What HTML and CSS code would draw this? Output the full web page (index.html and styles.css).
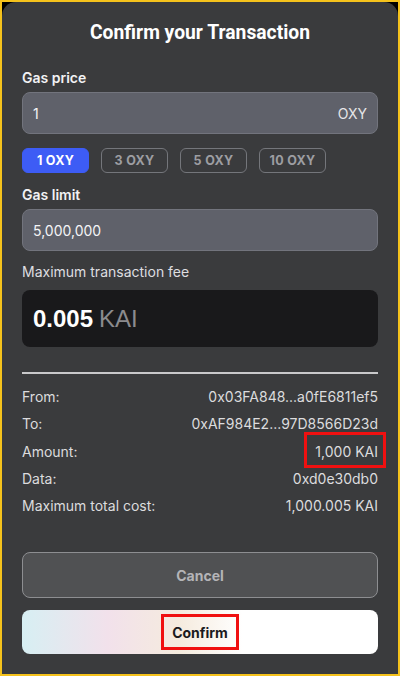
FILE: index.html
```html
<!DOCTYPE html>
<html lang="en">
<head>
    <meta charset="UTF-8">
    <meta name="viewport" content="width=device-width, initial-scale=1.0">
    <title>Confirm your Transaction</title>
    <link rel="stylesheet" href="styles.css">
</head>
<body>
    <div id="sheet">
        <h1>Confirm your Transaction</h1>

        <div class="label">Gas price</div>
        <div class="field">
            <span>1</span>
            <span class="unit">OXY</span>
        </div>

        <div class="chips">
            <button class="chip active">1 OXY</button>
            <button class="chip">3 OXY</button>
            <button class="chip">5 OXY</button>
            <button class="chip">10 OXY</button>
        </div>

        <div class="label">Gas limit</div>
        <div class="field">
            <span>5,000,000</span>
        </div>

        <div class="label light">Maximum transaction fee</div>
        <div class="fee">
            <span class="fee-value">0.005</span>
            <span class="fee-unit">KAI</span>
        </div>

        <hr class="divider">

        <div class="details">
            <div class="row"><span>From:</span><span>0x03FA848...a0fE6811ef5</span></div>
            <div class="row"><span>To:</span><span>0xAF984E2...97D8566D23d</span></div>
            <div class="row"><span>Amount:</span><span class="marked amount">1,000 KAI</span></div>
            <div class="row"><span>Data:</span><span>0xd0e30db0</span></div>
            <div class="row"><span>Maximum total cost:</span><span>1,000.005 KAI</span></div>
        </div>

        <div class="actions">
            <button class="btn cancel">Cancel</button>
            <button class="btn confirm"><span class="marked">Confirm</span></button>
        </div>
    </div>
</body>
</html>
```

FILE: styles.css
```css
* {
    margin: 0;
    padding: 0;
    box-sizing: border-box;
}

body {
    width: 400px;
    height: 676px;
    border: 2px solid #f5c21c;
    background: #000;
    font-family: Inter, "Open Sans", sans-serif;
    color: #e4e4e6;
    overflow: hidden;
}

#sheet {
    height: 100%;
    background: #3a3b3d;
    border-radius: 14px 14px 0 0;
    padding: 19px 20px 0;
    display: flex;
    flex-direction: column;
}

h1 {
    font-family: Roboto, "Liberation Sans", sans-serif;
    font-size: 19.3px;
    line-height: 24px;
    font-weight: 700;
    color: #fff;
    text-align: center;
}

.label {
    font-size: 14px;
    line-height: 18px;
    font-weight: 600;
    color: #f2f2f4;
    margin-top: 24px;
}

.label.light {
    font-weight: 400;
    color: #dedee0;
    margin-top: 12px;
}

.chips + .label {
    margin-top: 13px;
}

.field {
    margin-top: 5px;
    height: 42px;
    background: #5f616a;
    border: 1px solid #72747d;
    border-radius: 8px;
    padding: 0 10px;
    display: flex;
    align-items: center;
    justify-content: space-between;
    font-size: 14px;
    color: #f4f4f6;
}

.unit {
    color: #e6e6e8;
}

.chips {
    margin-top: 14px;
    display: flex;
    gap: 12px;
}

.chip {
    width: 67px;
    height: 25px;
    border: 1px solid #74767b;
    border-radius: 6px;
    background: transparent;
    color: #9d9ea2;
    font-family: Inter, sans-serif;
    font-size: 12.5px;
    font-weight: 700;
    letter-spacing: 0.3px;
}

.chip.active {
    background: #3d5cf5;
    border-color: #3d5cf5;
    color: #fff;
}

.fee {
    margin-top: 9px;
    height: 57px;
    background: #19191b;
    border-radius: 8px;
    padding: 0 11px;
    display: flex;
    align-items: center;
    gap: 6px;
    font-family: "Liberation Sans", Arial, sans-serif;
    font-size: 24px;
}

.fee-value {
    font-weight: 700;
    color: #fff;
}

.fee-unit {
    color: #8b8b8e;
}

.divider {
    margin-top: 25px;
    border: 0;
    border-top: 2px solid #c9c9cb;
}

.details {
    margin-top: 9px;
}

.row {
    height: 27.25px;
    display: flex;
    align-items: center;
    justify-content: space-between;
    font-size: 14px;
    color: #dcdcde;
}

.marked {
    position: relative;
}

.marked::after {
    content: "";
    position: absolute;
    top: -10px;
    bottom: -9px;
    left: -11px;
    right: -11px;
    border: 3px solid #f01010;
}

.amount::after {
    top: -11px;
    bottom: -8px;
    left: -11px;
    right: -8px;
}

.actions {
    margin-top: 33px;
    display: flex;
    flex-direction: column;
    gap: 12px;
}

.btn {
    width: 100%;
    border-radius: 8px;
    font-family: Inter, sans-serif;
    font-size: 14px;
    font-weight: 700;
}

.cancel {
    height: 46px;
    background: #505153;
    border: 1px solid #8d8e91;
    color: #b4b4b7;
}

.confirm {
    height: 44px;
    border: 0;
    color: #1b1b1d;
    background: linear-gradient(90deg, #d7eff3 0%, #f2e1eb 24%, #f5ebde 44%, #fff 62%, #fff 100%);
}
```
